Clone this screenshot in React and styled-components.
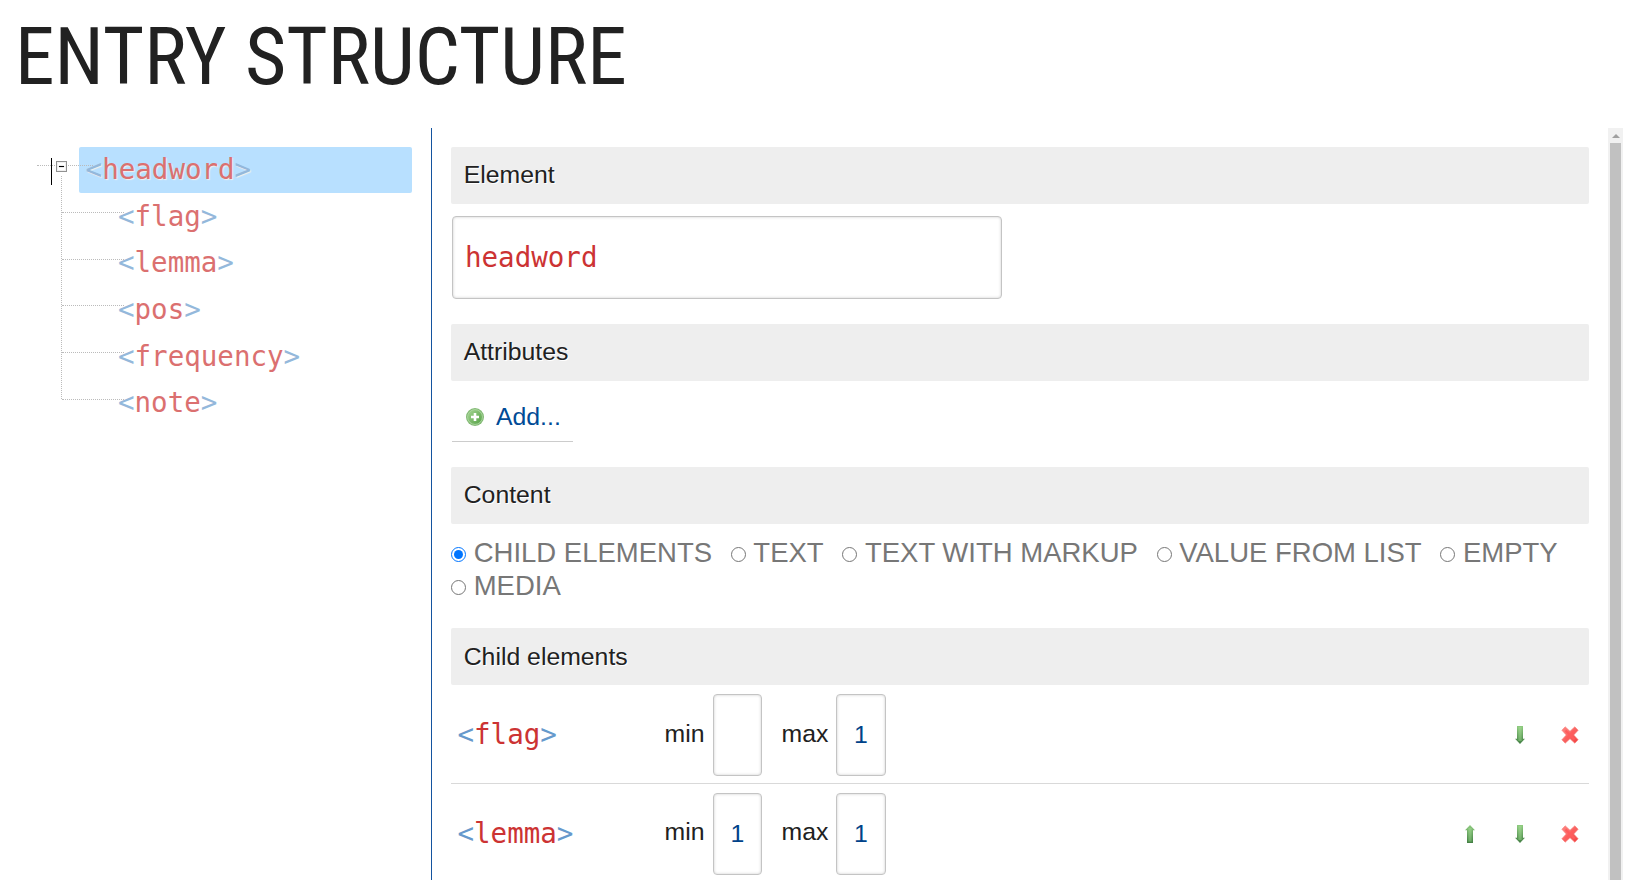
import React from "react";
import styled, { createGlobalStyle } from "styled-components";

const GlobalStyle = createGlobalStyle`
  * { box-sizing: border-box; }
  body {
    margin: 0;
    background: #fff;
    color: #212121;
    font-family: "Liberation Sans", Arial, sans-serif;
    overflow: hidden;
  }
`;

const Page = styled.div`
  height: 880px;
  display: flex;
  flex-direction: column;
  overflow: hidden;
`;

const Title = styled.h1`
  flex: none;
  height: 128px;
  margin: 0;
  padding: 10px 0 0 15px;
  font: 400 79.7px/94px "Roboto Condensed", Roboto, sans-serif;
  font-stretch: 75%;
  text-transform: uppercase;
  white-space: nowrap;
`;

const Columns = styled.div`
  flex: 1;
  min-height: 0;
  display: flex;
`;

const TreePanel = styled.nav`
  width: 432px;
  flex: none;
  padding: 19px 19px 0 37px;
  border-right: 1px solid #14549f;
`;

const mono = `"DejaVu Sans Mono", monospace`;

const TagName = styled.span`
  color: #cc3333;
`;

const Tag = styled.span`
  font: 27.5px/1 ${mono};
  color: ${(p) => (p.$dim ? "#94b8db" : "#6699cc")};
  text-shadow: ${(p) => (p.$raised ? "1px 1px 1px #f4f0ec" : "none")};
  ${TagName} {
    color: ${(p) => (p.$dim ? "#db7070" : "#cc3333")};
  }
`;

const RootRow = styled.div`
  height: 46px;
  display: flex;
  position: relative;
`;

const RootLine = styled.span`
  position: absolute;
  left: 0;
  top: 18px;
  width: 56px;
  border-top: 1px dotted #bbb;
`;

const Caret = styled.span`
  width: 1px;
  height: 27px;
  margin: 11px 4px 0 14px;
  background: #000;
`;

const Toggle = styled.span`
  position: relative;
  width: 11px;
  height: 11px;
  margin: 14px 12px 0 0;
  border: 1px solid #919191;
  background: #fff;
  display: flex;
  align-items: center;
  justify-content: center;
  box-shadow: inset 0 0 0 1px #f0f0f0;
  &::after {
    content: "";
    width: 5px;
    height: 1px;
    background: #000;
    box-shadow: 0 0 1px #333;
  }
`;

const Selected = styled.div`
  flex: 1;
  padding: 9px 0 0 6.6px;
  background: #b8e0ff;
  border-radius: 2px;
`;

const Branches = styled.ul`
  position: relative;
  margin: 0 0 0 24px;
  padding: 0;
  list-style: none;
  &::before {
    content: "";
    position: absolute;
    left: 0;
    top: -17px;
    height: 223px;
    border-left: 1px dotted #bbb;
  }
`;

const Branch = styled.li`
  position: relative;
  height: 46.6px;
  padding: 9.75px 0 0 57px;
  &::before {
    content: "";
    position: absolute;
    left: 1px;
    top: 19.2px;
    width: 62px;
    border-top: 1px dotted #bbb;
  }
`;

const Editor = styled.main`
  flex: 1;
  min-width: 0;
  padding: 19px 19px 0;
`;

const SectionBar = styled.h2`
  height: 57px;
  margin: 0;
  padding: ${(p) => (p.$low ? 1 : 0)}px 12.7px 0;
  background: #eee;
  border-radius: 2px;
  font-size: 24.8px;
  font-weight: 400;
  line-height: 56px;
  text-shadow: 1px 1px 0 #fff;
`;

const SectionBody = styled.div`
  height: ${(p) => p.$height}px;
  padding: ${(p) => p.$pad};
`;

const Field = styled.input`
  display: block;
  width: ${(p) => p.$width}px;
  height: ${(p) => p.$height}px;
  margin: 0;
  padding: 0 ${(p) => p.$padX}px ${(p) => p.$lift || 0}px;
  border: 1px solid #c4c4c4;
  border-radius: 4px;
  outline: 0;
  box-shadow: inset 0 0 3px #ccc;
  background: #fff;
  color: ${(p) => p.$color};
  font: ${(p) => p.$font};
  text-align: ${(p) => (p.$center ? "center" : "left")};
`;

const AddButton = styled.button`
  width: 121px;
  height: 48px;
  display: flex;
  align-items: center;
  gap: 12px;
  padding: 0 0 2px 14px;
  border: 0;
  border-bottom: 1px solid #ccc;
  background: none;
  color: #004b96;
  font: 24.8px "Liberation Sans", Arial, sans-serif;
`;

const Options = styled.div`
  display: flex;
  flex-wrap: wrap;
  column-gap: 18.6px;
`;

const Option = styled.label`
  height: 33px;
  display: flex;
  align-items: center;
  gap: 7.7px;
  color: #777;
  font-size: 27.5px;
  line-height: 33px;
  white-space: nowrap;
`;

const Radio = styled.input`
  width: 15px;
  height: 15px;
  margin: 3px 0 0;
`;

const ChildRow = styled.div`
  height: 98.6px;
  padding: 9px 0 0 6.5px;
  display: flex;
  border-bottom: 1px solid #d9d9d9;
`;

const ChildName = styled.div`
  width: 207px;
  padding-top: 27px;
`;

const Limit = styled.label`
  display: flex;
  width: ${(p) => p.$width}px;
  justify-content: space-between;
  margin-right: ${(p) => p.$after}px;
  font-size: 24.8px;
  line-height: ${(p) => (p.$first ? 79 : 78.4)}px;
`;

const Actions = styled.div`
  margin-left: auto;
  height: 82px;
  display: flex;
  align-items: center;
  gap: 32px;
  padding-right: 10px;
`;

const Icon = styled.svg`
  display: block;
  flex: none;
`;

function PlusIcon() {
  return (
    <Icon width="18" height="18" viewBox="0 0 18 18">
      <defs>
        <linearGradient id="plusFill" x1="0" y1="0" x2="1" y2="1">
          <stop offset="0" stopColor="#a5d693" />
          <stop offset="1" stopColor="#54a044" />
        </linearGradient>
      </defs>
      <circle cx="9" cy="9" r="9" fill="#82ba74" />
      <circle cx="9" cy="9" r="7.4" fill="url(#plusFill)" stroke="#b4dba8" strokeWidth=".8" />
      <path d="M9 5v8M5 9h8" stroke="#fff" strokeWidth="2.6" />
    </Icon>
  );
}

function ArrowIcon({ up }) {
  const id = up ? "arrowUp" : "arrowDown";
  return (
    <Icon width="18" height="18" viewBox="0 0 18 18">
      <defs>
        <linearGradient id={id} x1="0" y1="0" x2="0" y2="1">
          <stop offset="0" stopColor="#8fcc80" />
          <stop offset="1" stopColor="#437f44" />
        </linearGradient>
        <linearGradient id={`${id}Core`} gradientUnits="userSpaceOnUse" x1="0" y1="0" x2="0" y2="18">
          <stop offset="0" stopColor="#9ed68e" />
          <stop offset="1" stopColor="#68a862" />
        </linearGradient>
      </defs>
      <path
        d={up ? "M9 0l5 5.2h-2V18H6V5.2H4z" : "M6 0h6v12.8h2L9 18l-5-5.2h2z"}
        fill={`url(#${id})`}
      />
      <rect x="7.4" y={up ? 3 : 1} width="3.2" height={up ? 13.6 : 14} fill={`url(#${id}Core)`} />
    </Icon>
  );
}

function DeleteIcon() {
  return (
    <Icon width="18" height="18" viewBox="0 0 18 18">
      <defs>
        <linearGradient id="crossFill" x1="0" y1="0" x2="1" y2="1">
          <stop offset="0" stopColor="#ff8884" />
          <stop offset="1" stopColor="#f24040" />
        </linearGradient>
      </defs>
      <path
        d="M4.2.8L9 5.2 13.8.8 17.2 4.2 12.8 9l4.4 4.8-3.4 3.4L9 12.8l-4.8 4.4L.8 13.8 5.2 9 .8 4.2z"
        fill="url(#crossFill)"
        stroke="#fb8482"
        strokeWidth=".6"
        strokeLinejoin="round"
      />
      <path d="M4.5 4.5l9 9M13.5 4.5l-9 9" stroke="#ff5c5c" strokeWidth="2.2" />
    </Icon>
  );
}

const Scrollbar = styled.div`
  width: 15px;
  flex: none;
  margin-right: 14px;
  background: #f1f1f1;
  display: flex;
  flex-direction: column;
  align-items: center;
`;

const ScrollArrow = styled.div`
  flex: none;
  width: 0;
  margin: 6px 0 5px;
  border: solid transparent;
  border-width: 0 4px 4px;
  border-bottom-color: #a0a0a0;
`;

const ScrollThumb = styled.div`
  flex: 1;
  width: 11px;
  background: #c1c1c1;
`;

function Element({ name, dim, raised }) {
  return (
    <Tag $dim={dim} $raised={raised}>
      &lt;<TagName>{name}</TagName>&gt;
    </Tag>
  );
}

const sans = `24.8px "Liberation Sans", Arial, sans-serif`;
const branches = ["flag", "lemma", "pos", "frequency", "note"];
const contentTypes = ["CHILD ELEMENTS", "TEXT", "TEXT WITH MARKUP", "VALUE FROM LIST", "EMPTY", "MEDIA"];
const childElements = [
  { name: "flag", min: "", max: "1" },
  { name: "lemma", min: "1", max: "1" },
];

export default function App() {
  return (
    <Page>
      <GlobalStyle />
      <Title>Entry structure</Title>
      <Columns>
        <TreePanel>
          <RootRow>
            <RootLine />
            <Caret />
            <Toggle />
            <Selected>
              <Element name="headword" dim raised />
            </Selected>
          </RootRow>
          <Branches>
            {branches.map((name) => (
              <Branch key={name}>
                <Element name={name} dim />
              </Branch>
            ))}
          </Branches>
        </TreePanel>
        <Editor>
          <SectionBar>Element</SectionBar>
          <SectionBody $height={120} $pad="12px 1px 0">
            <Field $width={550} $height={83} $padX={12} $lift={2} $color="#cc3333" $font={`27.5px ${mono}`} defaultValue="headword" />
          </SectionBody>
          <SectionBar>Attributes</SectionBar>
          <SectionBody $height={86} $pad="13px 1px 0">
            <AddButton>
              <PlusIcon />
              Add...
            </AddButton>
          </SectionBody>
          <SectionBar>Content</SectionBar>
          <SectionBody $height={104} $pad="12px 0 0">
            <Options>
              {contentTypes.map((label, i) => (
                <Option key={label}>
                  <Radio type="radio" name="content" defaultChecked={i === 0} />
                  {label}
                </Option>
              ))}
            </Options>
          </SectionBody>
          <SectionBar $low>Child elements</SectionBar>
          {childElements.map((child, i) => (
            <ChildRow key={child.name}>
              <ChildName>
                <Element name={child.name} />
              </ChildName>
              <Limit $first={i === 0} $width={97.5} $after={19.5}>
                min
                <Field $width={49} $height={82} $padX={4} $center $color="#004289" $font={sans} defaultValue={child.min} />
              </Limit>
              <Limit $first={i === 0} $width={104.5} $after={0}>
                max
                <Field $width={50} $height={82} $padX={4} $center $color="#004289" $font={sans} defaultValue={child.max} />
              </Limit>
              <Actions>
                {i > 0 && <ArrowIcon up />}
                <ArrowIcon />
                <DeleteIcon />
              </Actions>
            </ChildRow>
          ))}
        </Editor>
        <Scrollbar>
          <ScrollArrow />
          <ScrollThumb />
        </Scrollbar>
      </Columns>
    </Page>
  );
}
